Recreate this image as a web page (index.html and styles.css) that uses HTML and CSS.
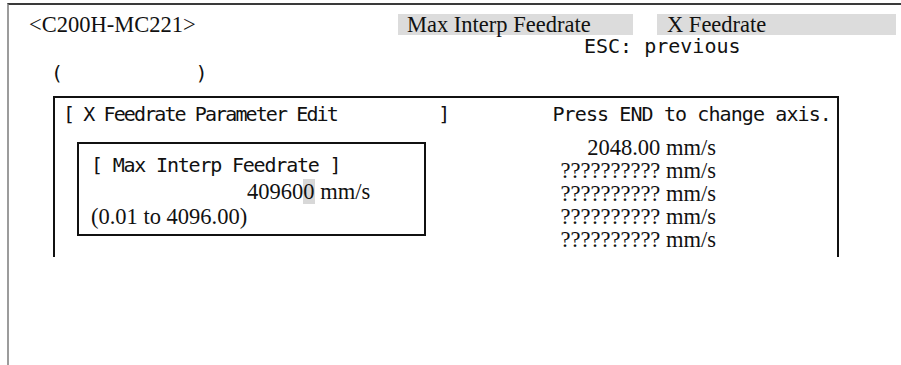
FILE: index.html
```html
<!DOCTYPE html>
<html lang="en">
<head>
    <meta charset="UTF-8">
    <title>C200H-MC221 X Feedrate Parameter Edit</title>
    <link rel="stylesheet" href="styles.css">
</head>
<body>
    <div class="screen">
        <div class="header">
            <div class="unit">&lt;C200H-MC221&gt;</div>
            <div class="tab tab-menu">Max Interp Feedrate</div>
            <div class="tab tab-axis">X Feedrate</div>
        </div>
        <div class="mono esc">ESC: previous</div>
        <div class="mono parens">(           )</div>

        <div class="panel">
            <div class="panel-left">
                <div class="mono panel-title">[ X Feedrate Parameter Edit          ]</div>
                <div class="edit-box">
                    <div class="mono edit-name">[ Max Interp Feedrate ]</div>
                    <div class="edit-value">40960<span class="cursor">0</span> mm/s</div>
                    <div class="edit-range">(0.01 to 4096.00)</div>
                </div>
            </div>
            <div class="panel-right">
                <div class="mono hint">Press END to change axis.</div>
                <div class="values">
                    <div>2048.00 mm/s</div>
                    <div>?????????? mm/s</div>
                    <div>?????????? mm/s</div>
                    <div>?????????? mm/s</div>
                    <div>?????????? mm/s</div>
                </div>
            </div>
        </div>
    </div>
</body>
</html>
```

FILE: styles.css
```css
body {
    margin: 0;
    background: #fff;
    color: #111;
    font-family: "Liberation Serif", serif;
    font-size: 22.5px;
}
.screen {
    margin: 3px 0 0 7px;
    height: 362px;
    box-sizing: border-box;
    border-top: 2px solid #3a3a3a;
    border-left: 2px solid #9c9c9c;
}
.mono {
    font-family: "DejaVu Sans Mono", monospace;
    font-size: 20px;
    white-space: pre;
}
.header {
    display: flex;
    padding: 9px 0 0 20px;
    height: 21px;
    line-height: 21px;
}
.unit {
    width: 369px;
}
.tab {
    background: #dcdcdc;
    box-sizing: border-box;
}
.tab-menu {
    width: 235px;
    padding-left: 9px;
}
.tab-axis {
    width: 239px;
    margin-left: 24px;
    padding-left: 10px;
}
.esc {
    margin-left: 575px;
    line-height: 22px;
}
.parens {
    margin: 5px 0 0 42px;
    line-height: 22px;
}
.panel {
    display: flex;
    justify-content: space-between;
    margin: 12px 0 0 44px;
    width: 786px;
    height: 161px;
    box-sizing: border-box;
    border: 2px solid #111;
    border-bottom: none;
}
.panel-left {
    padding-left: 8px;
}
.panel-title {
    margin-top: 4px;
    line-height: 24px;
    letter-spacing: -1.9px;
}
.edit-box {
    margin: 16px 0 0 14px;
    width: 349px;
    height: 94px;
    box-sizing: border-box;
    border: 2px solid #111;
    padding: 9px 0 0 12px;
}
.edit-name {
    line-height: 24px;
    letter-spacing: -1.2px;
}
.edit-value {
    margin-top: 3px;
    line-height: 24px;
    padding-left: 156px;
}
.cursor {
    background: #d8d8d8;
}
.edit-range {
    margin-top: 1px;
    line-height: 24px;
}
.panel-right {
    display: flex;
    flex-direction: column;
    align-items: flex-end;
    padding-right: 6px;
}
.hint {
    margin-top: 4px;
    line-height: 24px;
    letter-spacing: -0.9px;
}
.values {
    margin: 10px 115px 0 0;
    text-align: right;
    line-height: 23px;
}
```
